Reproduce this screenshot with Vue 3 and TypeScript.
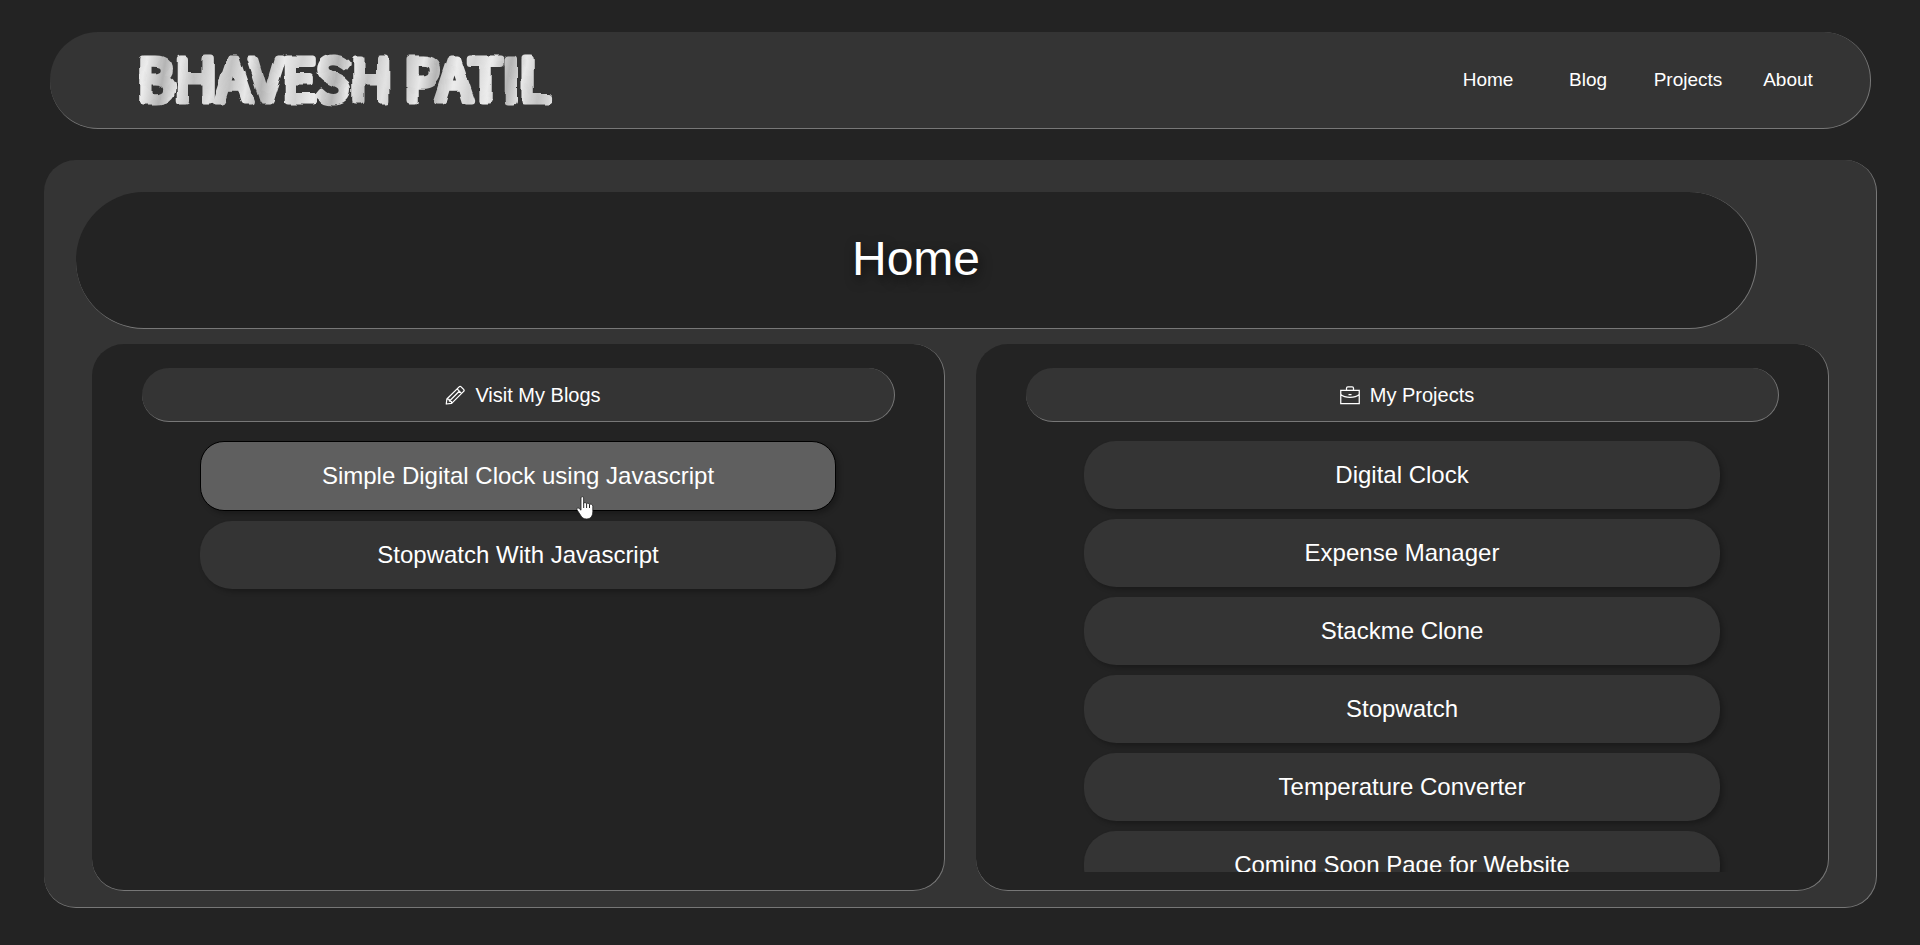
<script setup lang="ts">
interface Entry {
  title: string
  active?: boolean
}

const navLinks: string[] = ['Home', 'Blog', 'Projects', 'About']

const blogs: Entry[] = [
  { title: 'Simple Digital Clock using Javascript', active: true },
  { title: 'Stopwatch With Javascript' },
]

const projects: Entry[] = [
  { title: 'Digital Clock' },
  { title: 'Expense Manager' },
  { title: 'Stackme Clone' },
  { title: 'Stopwatch' },
  { title: 'Temperature Converter' },
  { title: 'Coming Soon Page for Website' },
]
</script>

<template>
  <div class="page">
    <header class="topbar">
      <a class="brand" href="#" aria-label="Bhavesh Patil">
        <svg class="logo" width="440" height="96" viewBox="0 0 440 96">
          <defs>
            <linearGradient id="paint" x1="0" y1="0" x2="84" y2="14" gradientUnits="userSpaceOnUse" spreadMethod="reflect">
              <stop offset="0" stop-color="#d2d2d2" />
              <stop offset="0.2" stop-color="#ececec" />
              <stop offset="0.42" stop-color="#b4b4b4" />
              <stop offset="0.6" stop-color="#e8e8e8" />
              <stop offset="0.8" stop-color="#c2c2c2" />
              <stop offset="1" stop-color="#e2e2e2" />
            </linearGradient>
            <filter id="brush" x="-2%" y="-5%" width="104%" height="110%">
              <feTurbulence type="fractalNoise" baseFrequency="0.06 0.04" numOctaves="2" seed="4" result="noise" />
              <feDisplacementMap in="SourceGraphic" in2="noise" scale="6" xChannelSelector="R" yChannelSelector="G" />
            </filter>
          </defs>
          <text class="wordmark" x="3" y="69" fill="url(#paint)" stroke="url(#paint)" stroke-width="7" stroke-linejoin="round" filter="url(#brush)">BHAVESH PATIL</text>
        </svg>
      </a>
      <nav class="nav">
        <a v-for="link in navLinks" :key="link" class="nav-link" href="#">{{ link }}</a>
      </nav>
    </header>

    <main class="content">
      <div class="banner">
        <h1 class="title">Home</h1>
      </div>

      <div class="panels">
        <section class="panel">
          <h2 class="panel-head">
            <svg class="icon" viewBox="0 0 16 16" fill="none" stroke="currentColor" stroke-width="1" stroke-linejoin="round" aria-hidden="true">
              <path d="M11.3 1.5Q12.1.7 12.9 1.5L14.9 3.5Q15.7 4.3 14.9 5.1L5.3 14.7 1 15.2 1.5 11.2Z" />
              <path d="M9.7 3.1 13.2 6.7M11.4 5 3.4 13M1.5 11.2 3.3 11.5 3.5 13 5.2 13.2 5.3 14.7" />
            </svg>
            <span>Visit My Blogs</span>
          </h2>
          <div class="list">
            <a v-for="blog in blogs" :key="blog.title" class="item" :class="{ active: blog.active }" href="#">
              {{ blog.title }}
              <svg v-if="blog.active" class="pointer" width="18" height="24" viewBox="0 0 18 24" aria-hidden="true">
                <path d="M5 1.8C5 .3 7.6.3 7.6 1.8V7.2C8.4 6.2 10.3 6.6 10.5 7.7 11.4 6.9 13.1 7.3 13.4 8.5 14.5 7.8 16.8 8.3 16.8 10.2V15.5C16.8 20 14.6 23 10.7 23 7.6 23 6 21.8 4.6 19.3L1 13.8C.2 12.4 1.8 11.4 3 12.3L5 14.2Z" fill="#fff" stroke="#222" stroke-width="0.8" />
                <path d="M7.7 7V12M10.6 7.7V12M13.5 8.5V12" fill="none" stroke="#222" stroke-width="1" />
              </svg>
            </a>
          </div>
        </section>

        <section class="panel">
          <h2 class="panel-head">
            <svg class="icon" viewBox="0 0 16 16" fill="none" stroke="currentColor" stroke-width="1" aria-hidden="true">
              <path d="M.6 4.2H15.4V14.9H.6ZM5.2 4V2.500Q5.200 1.400 6.300 1.400H9.700Q10.800 1.400 10.800 2.500V4M.6 7.600C4 10.600 12 10.600 15.400 7.600M6.800 7.700H9.200" />
            </svg>
            <span>My Projects</span>
          </h2>
          <div class="list">
            <a v-for="project in projects" :key="project.title" class="item" href="#">{{ project.title }}</a>
          </div>
        </section>
      </div>
    </main>
  </div>
</template>

<style>
body {
  margin: 0;
  background: #232323;
}
</style>

<style scoped>
.page {
  box-sizing: border-box;
  height: 100vh;
  padding: 32px 43px 37px 44px;
  display: flex;
  flex-direction: column;
  gap: 31px;
  background: #232323;
  color: #fff;
  font-family: "Liberation Sans", Arial, sans-serif;
}

a {
  color: inherit;
  text-decoration: none;
}

.topbar,
.content,
.banner,
.panel,
.panel-head {
  box-sizing: border-box;
  border-right: 1px solid #777;
  border-bottom: 1px solid #777;
}

.topbar {
  flex: none;
  height: 97px;
  margin: 0 6px;
  padding: 0 32px 0 84px;
  display: flex;
  align-items: center;
  justify-content: space-between;
  border-radius: 48px;
  background: #343434;
}

.brand,
.logo {
  display: block;
}

.logo {
  overflow: visible;
}

.wordmark {
  font-family: "Noto Sans CJK JP", "Liberation Sans", sans-serif;
  font-size: 57px;
  font-weight: 400;
}

.nav {
  display: flex;
}

.nav-link {
  width: 100px;
  text-align: center;
  font-size: 19px;
  line-height: 24px;
}

.content {
  flex: 1;
  min-height: 0;
  padding: 32px 47px 16px 48px;
  display: flex;
  flex-direction: column;
  gap: 15px;
  border-radius: 32px;
  background: #343434;
}

.banner {
  flex: none;
  height: 137px;
  margin: 0 72px 0 -16px;
  padding-bottom: 2px;
  display: flex;
  align-items: center;
  justify-content: center;
  border-radius: 68px;
  background: #232323;
}

.title {
  margin: 0;
  font-size: 48px;
  line-height: 56px;
  font-weight: 400;
  text-shadow: 2px 5px 12px rgba(0, 0, 0, 0.6);
}

.panels {
  flex: 1;
  min-height: 0;
  display: grid;
  grid-template-columns: 1fr 1fr;
  grid-template-rows: minmax(0, 1fr);
  gap: 31px;
}

.panel {
  padding: 24px 49px 18px 50px;
  display: flex;
  flex-direction: column;
  gap: 19px;
  border-radius: 32px;
  background: #232323;
}

.panel-head {
  flex: none;
  height: 54px;
  margin: 0;
  padding-left: 10px;
  display: flex;
  align-items: center;
  justify-content: center;
  gap: 10px;
  border-radius: 27px;
  background: #343434;
  font-size: 20px;
  line-height: 24px;
  font-weight: 400;
}

.icon {
  width: 20px;
  height: 20px;
}

.list {
  flex: 1;
  min-height: 0;
  padding: 0 59px 0 58px;
  display: flex;
  flex-direction: column;
  gap: 10px;
  overflow-y: auto;
  scrollbar-width: none;
}

.item {
  position: relative;
  flex: none;
  padding: 20px;
  border-radius: 32px;
  background: #343434;
  box-shadow: 3px 3px 5px rgba(0, 0, 0, 0.25);
  text-align: center;
  font-size: 24px;
  line-height: 28px;
}

.item.active {
  border: 1px solid #000;
  border-radius: 24px;
  background: #5f5f5f;
}

.pointer {
  position: absolute;
  left: 375px;
  bottom: -10px;
}
</style>
